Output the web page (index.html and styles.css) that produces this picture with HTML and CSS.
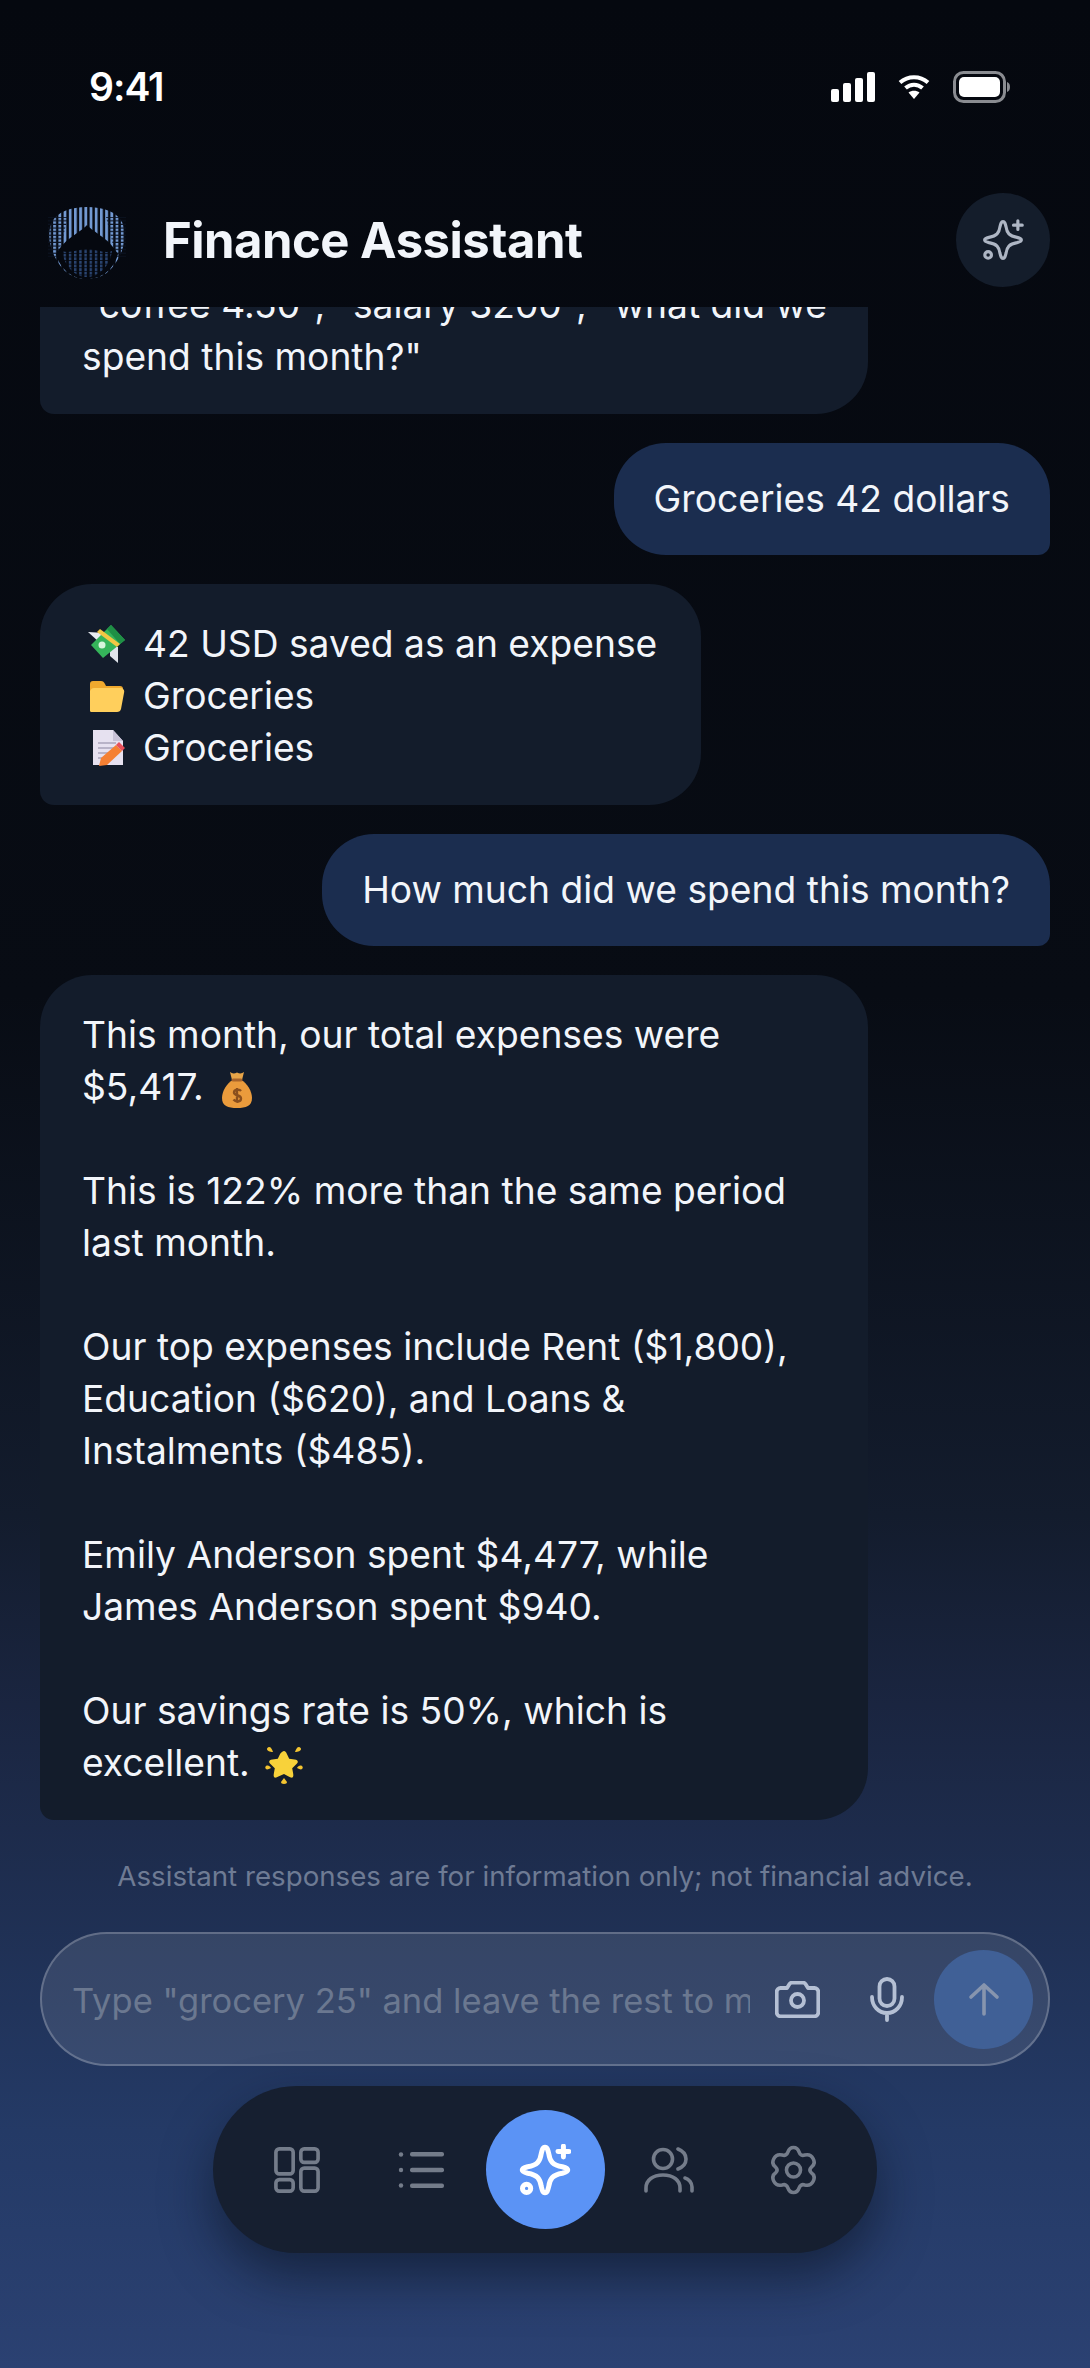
FILE: index.html
```html
<!DOCTYPE html>
<html>
<head>
<meta charset="utf-8"/>
<title>Finance Assistant</title>
<link rel="stylesheet" href="styles.css">
</head>
<body>
<svg class="defs" width="0" height="0">
  <defs>
    <symbol id="sparkle" viewBox="0 0 48 48" fill="none" stroke="currentColor" stroke-linecap="round" stroke-linejoin="round">
      <path d="M24 3C26 3 26.500 5 27.500 9C28.500 16 31 19.500 40 21C43.500 21.900 45 22.500 45 24C45 25.500 43.500 26.100 40 27C31 28.500 28.500 32 27.500 39C26.500 43 26 45 24 45C22 45 21.500 43 20.500 39C19.500 32 17 28.500 8 27C4.500 26.100 3 25.500 3 24C3 22.500 4.500 21.900 8 21C17 19.500 19.500 16 20.500 9C21.500 5 22 3 24 3z"/>
      <path d="M41 2v10M36 7h10"/>
      <circle cx="7" cy="41" r="3.800"/>
    </symbol>
  </defs>
</svg>

<div class="screen">
  <div class="status">
    <span class="time">9:41</span>
    <div class="status-icons">
      <svg class="signal" width="44" height="32" viewBox="0 0 44 32" fill="#fff">
        <rect x="0" y="18" width="8" height="13" rx="2"/>
        <rect x="12" y="12" width="8" height="19" rx="2"/>
        <rect x="24" y="7" width="8" height="24" rx="2"/>
        <rect x="36" y="1" width="8" height="30" rx="2"/>
      </svg>
      <svg class="wifi" width="32" height="26" viewBox="0 0 32 26" fill="none" stroke="#fff" stroke-width="4">
        <path d="M2 8.500c8-7 20-7 28 0"/>
        <path d="M7.500 14c5-4.500 12-4.500 17 0"/>
        <path d="M16 25l-5.500-6.500c3-2.500 8-2.500 11 0z" fill="#fff" stroke="none"/>
      </svg>
      <svg class="battery" width="57" height="32" viewBox="0 0 57 32">
        <rect x="1.500" y="1.500" width="50" height="29" rx="9" fill="none" stroke="#8a8c91" stroke-width="3"/>
        <rect x="6" y="6" width="41" height="20" rx="5" fill="#fff"/>
        <path d="M54 11c2 .6 3 2.500 3 5s-1 4.400-3 5z" fill="#8a8c91"/>
      </svg>
    </div>
  </div>

  <header class="top">
    <svg class="logo" width="78" height="72" viewBox="0 0 78 72">
      <defs>
        <pattern id="stripes" width="5.200" height="5.200" patternUnits="userSpaceOnUse">
          <rect width="2.800" height="5.200" fill="#7299d2"/>
        </pattern>
        <pattern id="mesh" width="5.200" height="3.600" patternUnits="userSpaceOnUse">
          <rect y="2.400" width="5.200" height="1.200" fill="#0b1220"/>
        </pattern>
        <pattern id="stripes-dim" width="5.200" height="3.600" patternUnits="userSpaceOnUse">
          <rect width="2.400" height="2.800" fill="#2a4470"/>
        </pattern>
      </defs>
      <path d="M39 0C55 0 69 5 74 15C79 26 77 40 70 52C64 63 55 72 39 72C23 72 14 63 8 52C1 40 -1 26 4 15C9 5 23 0 39 0z" fill="url(#stripes)"/>
      <path d="M0 10H20L10 50H0zM58 10H78V50H68z" fill="url(#mesh)"/>
      <path d="M39 18C32 26 18 30 8 47C12 62 24 72 39 72C54 72 66 62 70 47C60 30 46 26 39 18z" fill="#05080f"/>
      <path d="M14 44C22 47 30 42 39 42C48 42 56 47 64 44C62 58 52 70 39 70C26 70 16 58 14 44z" fill="url(#stripes-dim)"/>
    </svg>
    <h1 class="title">Finance Assistant</h1>
    <button class="round-btn">
      <svg class="sparkle-sm" width="42" height="42"><use href="#sparkle"/></svg>
    </button>
  </header>

  <main class="chat">
    <div class="msg bot wide tight">"coffee 4.50", "salary 3200", "what did we spend this month?"</div>
    <div class="msg user">Groceries 42 dollars</div>
    <div class="msg bot saved">
      <div class="line">
        <svg class="emoji" width="38" height="38" viewBox="0 0 38 38">
          <path d="M0 7l17 1-6 9z" fill="#e9edf2"/>
          <path d="M22 22l8 0 0 16-8-7z" fill="#dfe3ea"/>
          <path d="M23 0l14 15-22 18L3 20z" fill="#35b45a"/>
          <path d="M23 0l14 15-5 4-13-15z" fill="#1f8f45"/>
          <path d="M9 7l20 15 3-3L12 4z" fill="#f2c744"/>
          <circle cx="14" cy="20" r="3.500" fill="#d6f5dc"/>
        </svg>42 USD saved as an expense
      </div>
      <div class="line">
        <svg class="emoji" width="38" height="38" viewBox="0 0 38 38">
          <path d="M2 7c0-2 1-3 3-3h8c2 0 3 1 4 3l1 2h14c2 0 3 1 3 3v2H2z" fill="#f0a92e"/>
          <path d="M2 34V14c1-2 2-3 4-3h26c3 0 5 2 4 5l-3 16c-.4 2-2 3-4 3H4c-1 0-2-.4-2-1z" fill="#ffcf5c"/>
        </svg>Groceries
      </div>
      <div class="line">
        <svg class="emoji" width="38" height="38" viewBox="0 0 38 38">
          <path d="M5 1h20l10 11v24H5z" fill="#e6e1f0"/>
          <path d="M25 1l10 11H25z" fill="#c9c3d8"/>
          <path d="M10 14h18M10 19h18M10 24h12M10 29h6" stroke="#a9a4ba" stroke-width="1.500"/>
          <path d="M11 37l2-8 15-13 6 6-15 14z" fill="#f58033"/>
          <path d="M28 16l3-3 6 6-3 3z" fill="#e8505b"/>
        </svg>Groceries
      </div>
    </div>
    <div class="msg user">How much did we spend this month?</div>
    <div class="msg bot wide">
      <p>This month, our total expenses were $5,417. <svg class="emoji bag" width="30" height="37" viewBox="0 0 30 37">
          <path d="M8 1c2 1.500 4 2 7 .5 3 1.500 5 1 7-.5l-2 8h-10z" fill="#e8a548"/>
          <path d="M11 9h8c6 3 11 11 11 18 0 8-6 10-15 10S0 35 0 27C0 20 5 12 11 9z" fill="#ea9b3c"/>
          <rect x="9.500" y="7.500" width="11" height="3" rx="1.500" fill="#a8642a"/>
          <path d="M15 17v15M19 20c-1.500-2-7-2-7 1.500s7 2 7 6-5.500 3.500-7.500 1" fill="none" stroke="#8a4f1d" stroke-width="2.400"/>
        </svg></p>
      <p>This is 122% more than the same period last month.</p>
      <p>Our top expenses include Rent ($1,800), Education ($620), and Loans &amp; Instalments ($485).</p>
      <p>Emily Anderson spent $4,477, while James Anderson spent $940.</p>
      <p>Our savings rate is 50%, which is excellent. <svg class="emoji star" width="38" height="38" viewBox="0 0 38 38" fill="#f4c430">
          <path d="M19 5c1.200 0 2 1 2.800 2.800l2.400 5 5.400.8c2.200.3 3.200 1.100 3.200 2.200 0 .9-.6 1.700-1.800 2.800l-3.800 3.700 1 5.400c.4 2.200 0 3.400-1 3.900-.9.400-2 0-3.600-1L19 28l-5.600 2.600c-1.600 1-2.700 1.400-3.600 1-1-.5-1.400-1.700-1-3.900l1-5.400-3.800-3.700c-1.200-1.100-1.800-1.900-1.800-2.800 0-1.100 1-1.900 3.200-2.200l5.400-.8 2.400-5C17 6 17.800 5 19 5z" fill="#f8d23a"/>
          <path d="M4 1c2 0 3 2 4 5-3 0-6-1-6-3 0-1 1-2 2-2zM34 1c-2 0-3 2-4 5 3 0 6-1 6-3 0-1-1-2-2-2zM1 20c2-1 4 0 5 2-2 1-4 2-5 1-1-1-1-2 0-3zM37 20c-2-1-4 0-5 2 2 1 4 2 5 1 1-1 1-2 0-3zM19 32l3 4c0 1-1 2-3 2s-3-1-3-2z"/>
        </svg></p>
    </div>
  </main>

  <p class="note">Assistant responses are for information only; not financial advice.</p>

  <div class="composer">
    <span class="placeholder">Type "grocery 25" and leave the rest to me</span>
    <svg class="camera" width="45" height="37" viewBox="0 0 45 37" fill="none" stroke="currentColor" stroke-width="3.800" stroke-linejoin="round">
      <path d="M5.500 7h6.500l2.500-4c.6-.9 1.300-1.300 2.300-1.300h11.400c1 0 1.700.4 2.300 1.300l2.500 4h6.500c2 0 3.800 1.800 3.800 3.800v20.700c0 2-1.800 3.800-3.800 3.800H5.500c-2 0-3.800-1.800-3.800-3.800V10.800c0-2 1.800-3.800 3.800-3.800z"/>
      <circle cx="22.500" cy="19.500" r="6.500"/>
    </svg>
    <svg class="mic" width="34" height="45" viewBox="0 0 34 45" fill="none" stroke="currentColor" stroke-width="3.800" stroke-linecap="round">
      <rect x="9.500" y="2" width="15" height="27" rx="7.500"/>
      <path d="M2 20c0 9 6.500 16 15 16s15-7 15-16M17 36v7"/>
    </svg>
    <button class="send">
      <svg width="32" height="34" viewBox="0 0 32 34" fill="none" stroke="#8795ae" stroke-width="3.600" stroke-linecap="round" stroke-linejoin="round">
        <path d="M16 32V3M3 15L16 3l13 12"/>
      </svg>
    </button>
  </div>

  <nav class="tabs">
    <div class="tab">
      <svg width="46" height="46" viewBox="0 0 48 48" fill="none" stroke="currentColor" stroke-width="3.800">
        <rect x="2" y="2" width="18" height="26" rx="3.500"/>
        <rect x="28" y="2" width="18" height="14" rx="3.500"/>
        <rect x="28" y="22" width="18" height="24" rx="3.500"/>
        <rect x="2" y="34" width="18" height="12" rx="3.500"/>
      </svg>
    </div>
    <div class="tab">
      <svg width="46" height="36" viewBox="0 0 46 36" fill="currentColor">
        <circle cx="3" cy="2.500" r="2.200"/><circle cx="3" cy="18" r="2.200"/><circle cx="3" cy="33.500" r="2.200"/>
        <rect x="12" y="0" width="34" height="4.600" rx="2"/>
        <rect x="12" y="15.700" width="34" height="4.600" rx="2"/>
        <rect x="12" y="31.400" width="34" height="4.600" rx="2"/>
      </svg>
    </div>
    <div class="tab">
      <div class="tab-active">
        <svg class="sparkle-lg" width="52" height="52"><use href="#sparkle"/></svg>
      </div>
    </div>
    <div class="tab">
      <svg width="50" height="46" viewBox="0 0 50 46" fill="none" stroke="currentColor" stroke-width="3.600" stroke-linecap="round">
        <circle cx="19" cy="12" r="9.500"/>
        <path d="M34 2c5 2 8 6 8 10s-3 8-8 10"/>
        <path d="M2 44V41c0-8 7-13 17-13s17 5 17 13v3"/>
        <path d="M41 31c4 1 7 5 7 9v4"/>
      </svg>
    </div>
    <div class="tab">
      <svg width="45" height="50" viewBox="0 0 48 52" fill="none" stroke="currentColor" stroke-width="3.800" stroke-linejoin="round">
        <path d="M24 2c3 0 5 2 6 5 1 3 3 4 6 3 4-1 7 0 9 4s1 7-2 9c-2 2-2 4 0 6 3 2 4 5 2 9s-5 5-9 4c-3-1-5 0-6 3-1 3-3 5-6 5s-5-2-6-5c-1-3-3-4-6-3-4 1-7 0-9-4s-1-7 2-9c2-2 2-4 0-6-3-2-4-5-2-9s5-5 9-4c3 1 5 0 6-3 1-3 3-5 6-5z"/>
        <circle cx="24" cy="26" r="7.500"/>
      </svg>
    </div>
  </nav>
</div>
</body>
</html>
```

FILE: styles.css
```css
* {
  box-sizing: border-box;
}

html, body {
  margin: 0;
  padding: 0;
}

body {
  background-color: #05080f;
  font-family: Inter, "Liberation Sans", sans-serif;
  color: #f2f5fa;
}

.defs {
  display: block;
  height: 0;
}

.screen {
  width: 1090px;
  height: 2368px;
  display: flex;
  flex-direction: column;
  overflow: hidden;
  background: linear-gradient(to bottom, #05080f 0%, #080c14 42%, #131c2d 64%, #1a2540 72%, #243a66 90%, #2b4172 100%);
}

/* status bar */
.status {
  height: 175px;
  flex: none;
  padding: 65px 80px 0 89px;
  display: flex;
  justify-content: space-between;
  align-items: flex-start;
}

.time {
  font-size: 39px;
  line-height: 44px;
  font-weight: 600;
  letter-spacing: -1px;
  color: #fff;
}

.status-icons {
  display: flex;
  align-items: center;
  gap: 23px;
  padding-top: 6px;
}

/* header */
.top {
  height: 132px;
  flex: none;
  display: flex;
  align-items: flex-start;
  padding: 18px 40px 0 48px;
}

.logo {
  margin-top: 14px;
  flex: none;
}

.title {
  margin: 20px 0 0 37px;
  flex: 1;
  font-size: 49px;
  line-height: 56px;
  font-weight: 700;
  letter-spacing: -0.5px;
}

.round-btn {
  width: 94px;
  height: 94px;
  border: none;
  border-radius: 50%;
  background: #141d2b;
  color: #aeb6c4;
  display: flex;
  align-items: center;
  justify-content: center;
  padding: 0;
}

.sparkle-sm {
  stroke-width: 3.600;
}

/* messages */
.chat {
  height: 1513px;
  flex: none;
  overflow: hidden;
  display: flex;
  flex-direction: column;
  justify-content: flex-end;
  align-items: flex-start;
  gap: 29px;
  padding: 0 40px;
}

.msg {
  flex: none;
  font-size: 37.200px;
  line-height: 52px;
  color: #f2f5fa;
}

.msg p {
  margin: 0 0 52px;
}

.msg p:last-child {
  margin-bottom: 0;
}

.bot {
  background: #131c2b;
  border-radius: 52px 52px 52px 14px;
  padding: 34px 42px 31px;
}

.wide {
  width: 828px;
}

.tight {
  padding-right: 34px;
}

.saved {
  width: 661px;
}

.user {
  align-self: flex-end;
  background: #1b2d4f;
  border-radius: 52px 52px 12px 52px;
  padding: 30px 40px;
}

.line {
  display: flex;
  align-items: center;
  padding-left: 6px;
}

.line .emoji {
  margin-right: 17px;
  flex: none;
}

.bag {
  vertical-align: -8px;
  margin-left: 8px;
}

.star {
  vertical-align: -8px;
  margin-left: 5px;
}

.note {
  margin: 38px 0 0;
  flex: none;
  text-align: center;
  font-size: 27.700px;
  line-height: 36px;
  color: #6e7b94;
}

/* input */
.composer {
  margin: 38px 40px 0;
  height: 134px;
  flex: none;
  border: 2px solid rgba(255, 255, 255, 0.22);
  border-radius: 67px;
  background: rgba(255, 255, 255, 0.1);
  display: flex;
  align-items: center;
  padding: 0 15px 0 30px;
}

.placeholder {
  width: 678px;
  flex: none;
  overflow: hidden;
  white-space: nowrap;
  font-size: 34.500px;
  padding-top: 3px;
  color: #6b7890;
}

.camera {
  flex: none;
  color: #b5c0d4;
  margin-left: 25px;
}

.mic {
  flex: none;
  color: #b5c0d4;
  margin-left: 50px;
}

.send {
  width: 99px;
  height: 99px;
  margin-left: 30px;
  flex: none;
  border: none;
  border-radius: 50%;
  background: #406096;
  display: flex;
  align-items: center;
  justify-content: center;
  padding: 0;
}

/* bottom nav */
.tabs {
  margin: 20px auto 0;
  width: 664px;
  height: 167px;
  flex: none;
  background: #161f30;
  border-radius: 84px;
  box-shadow: 0 24px 50px rgba(10, 16, 30, 0.55);
  display: grid;
  grid-template-columns: repeat(5, 124px);
  align-items: center;
  justify-items: center;
  padding: 0 22px;
}

.tab {
  color: #747c8a;
  display: flex;
  align-items: center;
  justify-content: center;
}

.tab-active {
  width: 119px;
  height: 119px;
  flex: none;
  border-radius: 50%;
  background: #5b93f5;
  color: #fff;
  display: flex;
  align-items: center;
  justify-content: center;
}

.sparkle-lg {
  stroke-width: 4.600;
}
```
